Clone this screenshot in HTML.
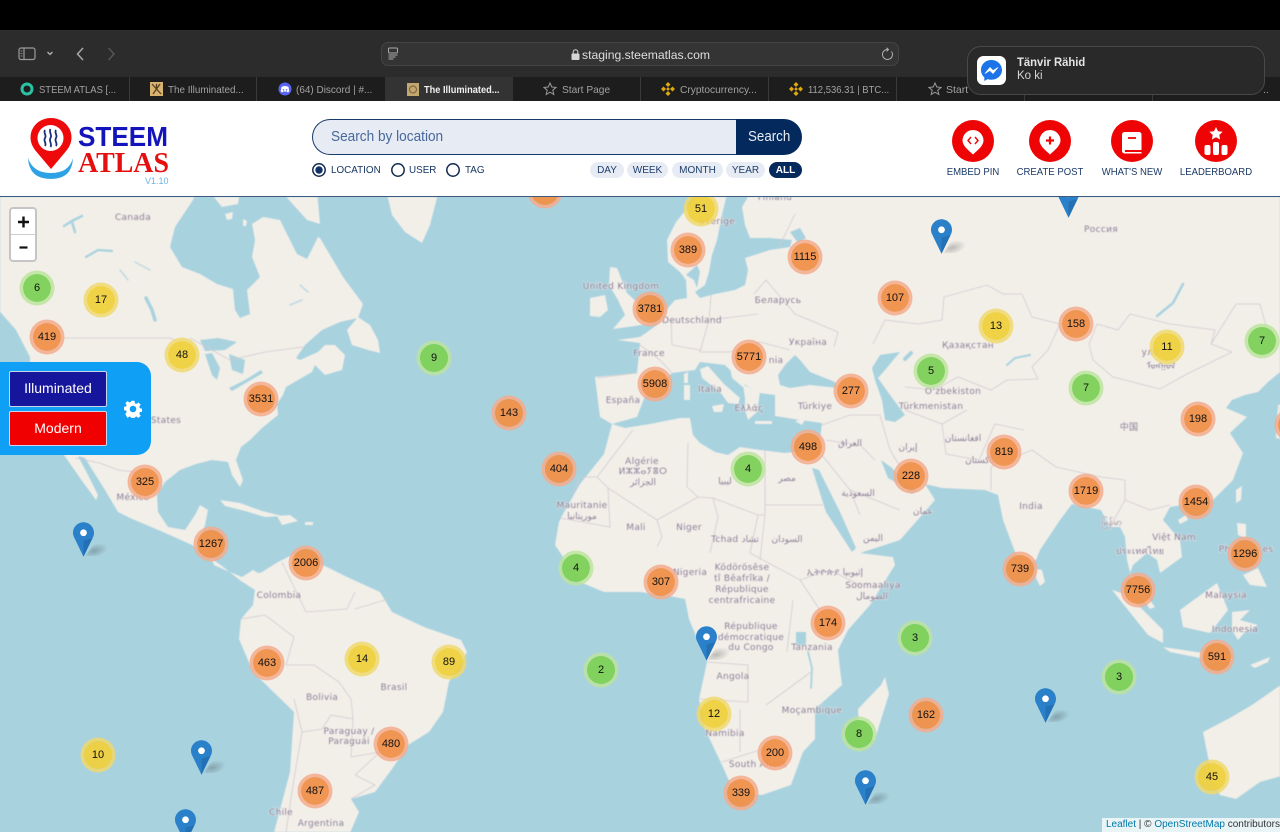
<!DOCTYPE html>
<html><head><meta charset="utf-8"><title>Steem Atlas</title>
<style>
*{box-sizing:border-box}
html,body{margin:0;padding:0;width:1280px;height:832px;overflow:hidden;background:#000;font-family:"Liberation Sans","Noto Sans CJK SC",sans-serif}
#root{position:relative;width:1280px;height:832px;overflow:hidden;background:#000}
.a{position:absolute}
#toolbar{left:0;top:30px;width:1280px;height:47px;background:#2d2c2d}
#tabs{left:0;top:77px;width:1280px;height:24px;background:#1d1d1d}
.sep{position:absolute;top:77px;width:1px;height:24px;background:#3a3a3a}
.tab{position:absolute;top:83.500px;font-size:10.500px;line-height:13px;color:#a2a2a2;white-space:nowrap;transform-origin:0 50%}
#addr{left:381px;top:42px;width:518px;height:24px;border-radius:7px;background:#353435;border:1px solid #454445}
#url{left:582px;top:47.500px;font-size:12.200px;line-height:14px;color:#dedede}
#notif{left:967px;top:46px;width:298px;height:49px;border-radius:14px;background:rgba(42,41,42,.97);border:1px solid #4a494a}
#header{left:0;top:101px;width:1280px;height:96px;background:#fff;border-bottom:1.500px solid #3c5a80}
#search{left:312px;top:119px;width:424px;height:36px;background:#e6ebf4;border:1.500px solid #173a68;border-right:0;border-radius:18px 0 0 18px}
#stxt{left:331px;top:129px;font-size:14.500px;line-height:17px;color:#48689a;transform:scaleX(.94);transform-origin:0 0;white-space:nowrap}
#sbtn{left:736px;top:119px;width:66px;height:36px;background:#042a5d;border-radius:0 18px 18px 0}
#sbt{left:748px;top:129px;color:#e8edf5;font-size:14.500px;line-height:17px;transform:scaleX(.92);transform-origin:0 0}
.rl{position:absolute;top:164px;font-size:10.500px;line-height:13px;color:#12325f;transform:scaleX(.94);transform-origin:0 0}
.pill{position:absolute;top:162px;height:16px;border-radius:8px;background:#e6ebf4;color:#1f3d6b;font-size:10px;line-height:17px;text-align:center}
.lab{position:absolute;top:165.500px;font-size:10.500px;line-height:13px;color:#1c3a66;white-space:nowrap;text-align:center;width:90px;transform:scaleX(.91)}
#map{left:0;top:197px;width:1280px;height:635px;overflow:hidden;background:#a9d2df}
#zoomc{left:9px;top:207px;width:28px;height:55px;background:#fff;border:2px solid #c5c5c5;border-radius:4px}
#panel{left:0;top:362px;width:151px;height:93px;background:#0f9ff5;border-radius:0 14px 14px 0}
.btn{position:absolute;left:9px;width:98px;height:36px;color:#fff;font-size:14px;text-align:center;line-height:33px;border:1px solid #c9d6ee;border-radius:2px}
#attr{left:1102px;top:818px;width:178px;height:14px;background:rgba(255,255,255,.75);font-size:10px;line-height:14px;color:#333;padding-left:4px;white-space:nowrap}
#attr span{color:#0078a8}
.c{position:absolute;width:28px;height:28px;margin:-14px 0 0 -14px;border-radius:50%;font-style:normal;font-size:11px;line-height:28px;text-align:center;color:#111}
.o{background:rgba(240,145,75,.96);box-shadow:0 0 0 3.500px rgba(245,172,140,.85)}
.y{background:rgba(239,208,62,.95);box-shadow:0 0 0 3.500px rgba(240,216,110,.85)}
.g{background:rgba(126,208,88,.96);box-shadow:0 0 0 3.500px rgba(188,228,158,.85)}
.pin{position:absolute;width:21px;height:35px}
.sh{position:absolute;width:18px;height:13px;background:radial-gradient(ellipse at 30% 60%,rgba(0,0,0,.22),rgba(0,0,0,0) 70%);transform:skewX(-35deg)}
</style></head><body><div id="root">

<div class="a" id="toolbar"></div>
<div class="a" id="tabs"></div>
<div class="a" style="left:385px;top:77px;width:128px;height:24px;background:#343334"></div>
<div class="sep" style="left:129px"></div><div class="sep" style="left:256px"></div><div class="sep" style="left:640px"></div><div class="sep" style="left:768px"></div><div class="sep" style="left:896px"></div><div class="sep" style="left:1024px"></div><div class="sep" style="left:1152px"></div>

<svg class="a" style="left:0;top:30px" width="130" height="47" viewBox="0 0 130 47" fill="none" stroke="#9a9a9a">
 <rect x="19" y="18" width="16" height="11.500" rx="2" stroke-width="1.200"/><path d="M24 18v11.500" stroke-width="1.200"/><path d="M20.500 21h2M20.500 23.500h2M20.500 26h2" stroke-width=".8"/>
 <path d="M47.500 22l2.500 2.500 2.500-2.500" stroke-width="1.300" stroke="#b5b5b5"/>
 <path d="M83 18l-5.500 6 5.500 6" stroke-width="1.500" stroke="#a8a8a8"/>
 <path d="M108.500 18l5.500 6-5.500 6" stroke-width="1.500" stroke="#555"/>
</svg>
<div class="a" id="addr"></div>
<svg class="a" style="left:387px;top:47px" width="14" height="14" viewBox="0 0 14 14" fill="none" stroke="#aaa" stroke-width="1"><rect x="1.500" y="1" width="9" height="5" rx="1"/><path d="M1.500 8h9M1.500 10h7M1.500 12h5"/></svg>
<svg class="a" style="left:570px;top:48px" width="11" height="13" viewBox="0 0 11 13"><rect x="1.500" y="5.500" width="8" height="6.500" rx="1" fill="#d5d5d5"/><path d="M3.200 6V4a2.300 2.300 0 0 1 4.600 0v2" fill="none" stroke="#d5d5d5" stroke-width="1"/></svg>
<div class="a" id="url">staging.steematlas.com</div>
<svg class="a" style="left:881px;top:47px" width="13" height="14" viewBox="0 0 13 14" fill="none" stroke="#b0b0b0" stroke-width="1"><path d="M10.500 4.500a5 5 0 1 1-3.500-2"/><path d="M5.500 0.800L7.500 2.500 5.700 4.400"/></svg>

<svg class="a" style="left:20px;top:82px" width="14" height="14" viewBox="0 0 14 14"><circle cx="7" cy="7" r="5" fill="none" stroke="#2bc2a4" stroke-width="3"/><path d="M4 3l4-2 1 3z" fill="#2bc2a4"/></svg>
<div class="tab" style="left:39px;transform:scaleX(.9)">STEEM ATLAS [...</div>
<svg class="a" style="left:150px;top:82px" width="13" height="14" viewBox="0 0 13 14"><rect width="13" height="14" fill="#d7b270"/><path d="M2 2l9 10M10 2L3 12M6.500 2v5" stroke="#5a3f20" stroke-width="1.300"/></svg>
<div class="tab" style="left:168px;transform:scaleX(.94)">The Illuminated...</div>
<svg class="a" style="left:278px;top:82px" width="14" height="14" viewBox="0 0 14 14"><circle cx="7" cy="7" r="6.500" fill="#5865f2"/><path d="M3.500 5q3.500-2 7 0l.8 4.500q-1 .8-2 .8l-.6-.9q-1.700.4-3.400 0l-.6.9q-1 0-2-.8z" fill="#fff"/><circle cx="5.500" cy="7.800" r=".8" fill="#5865f2"/><circle cx="8.500" cy="7.800" r=".8" fill="#5865f2"/></svg>
<div class="tab" style="left:296px;transform:scaleX(.95)">(64) Discord | #...</div>
<svg class="a" style="left:407px;top:83px" width="12" height="13" viewBox="0 0 12 13"><rect width="12" height="13" fill="#c4a76f"/><circle cx="6" cy="6.500" r="3.500" fill="none" stroke="#7d6a45" stroke-width="1.200"/></svg>
<div class="tab" style="left:424px;color:#f0f0f0;font-weight:bold;transform:scaleX(.88)">The Illuminated...</div>
<svg class="a" style="left:543px;top:82px" width="14" height="14" viewBox="0 0 14 14"><path d="M7 1l1.800 4 4.200.4-3.200 2.800 1 4.300L7 10.200 3.200 12.500l1-4.300L1 5.400 5.200 5z" fill="none" stroke="#9a9a9a"/></svg>
<div class="tab" style="left:562px;transform:scaleX(.97)">Start Page</div>
<svg class="a" style="left:661px;top:82px" width="14" height="14" viewBox="0 0 14 14" fill="#e0a80f"><path d="M7 0l2.500 2.500L7 5 4.500 2.500zM7 9l2.500 2.500L7 14l-2.500-2.500zM2.500 4.500L5 7 2.500 9.500 0 7zM11.500 4.500L14 7l-2.500 2.500L9 7z"/><rect x="5.700" y="5.700" width="2.600" height="2.600" transform="rotate(45 7 7)"/></svg>
<div class="tab" style="left:680px;transform:scaleX(.97)">Cryptocurrency...</div>
<svg class="a" style="left:789px;top:82px" width="14" height="14" viewBox="0 0 14 14" fill="#e0a80f"><path d="M7 0l2.500 2.500L7 5 4.500 2.500zM7 9l2.500 2.500L7 14l-2.500-2.500zM2.500 4.500L5 7 2.500 9.500 0 7zM11.500 4.500L14 7l-2.500 2.500L9 7z"/><rect x="5.700" y="5.700" width="2.600" height="2.600" transform="rotate(45 7 7)"/></svg>
<div class="tab" style="left:808px;transform:scaleX(.9)">112,536.31 | BTC...</div>
<svg class="a" style="left:928px;top:82px" width="14" height="14" viewBox="0 0 14 14"><path d="M7 1l1.800 4 4.200.4-3.200 2.800 1 4.300L7 10.200 3.200 12.500l1-4.300L1 5.400 5.200 5z" fill="none" stroke="#9a9a9a"/></svg>
<div class="tab" style="left:946px">Start</div>
<div class="tab" style="left:1263px">..</div>

<div class="a" id="notif"></div>
<svg class="a" style="left:977px;top:56px" width="29" height="29" viewBox="0 0 29 29"><rect width="29" height="29" rx="6.500" fill="#fff"/><path d="M14.500 4C8.500 4 4 8.300 4 14c0 3 1.200 5.500 3.300 7.300V25l3.400-1.900c1.200.4 2.500.6 3.800.6 6 0 10.500-4.300 10.500-9.700S20.500 4 14.500 4z" fill="#1c74e8"/><path d="M8 17.500l5-6 3 3 5-3-5 6-3-3z" fill="#fff" stroke="#fff" stroke-width=".6" stroke-linejoin="round"/></svg>
<div class="a" style="left:1017px;top:55px;font-size:12px;line-height:15px;color:#e4e4e4;font-weight:bold;transform:scaleX(.94);transform-origin:0 0">Tänvir Rähid</div>
<div class="a" style="left:1017px;top:69px;font-size:11.500px;line-height:15px;color:#d5d5d5">Ko ki</div>

<div class="a" id="header"></div>
<svg class="a" style="left:0;top:101px" width="200" height="96" viewBox="0 0 200 96">
 <path d="M28 57Q29 78 51 78Q72 78 73 57Q69 72 51 72Q33 72 28 57z" fill="#2da3e6"/>
 <path d="M51 17c-11.500 0-20.500 8.500-20.500 19.500 0 6 3 11 7 15.500L51 68l13.500-16c4-4.500 7-9.500 7-15.500C71.500 25.500 62.500 17 51 17z" fill="#ee0a0a"/>
 <circle cx="50.500" cy="37" r="13" fill="#fff"/>
 <path d="M45 29c-2 3 2 5 0 8s2 5 0 8M50.500 28c-2 3 2 6 0 9s2 6 0 9M56 29c-2 3 2 5 0 8s2 5 0 8" fill="none" stroke="#1a2f78" stroke-width="1.800"/>
 <text x="78" y="45" font-family="Liberation Sans" font-weight="bold" font-size="28" fill="#1414bd" textLength="90" lengthAdjust="spacingAndGlyphs">STEEM</text>
 <text x="78" y="71" font-family="Liberation Serif" font-weight="bold" font-size="29" fill="#e60f0f" textLength="91" lengthAdjust="spacingAndGlyphs">ATLAS</text>
 <text x="145" y="83" font-family="Liberation Sans" font-size="9" fill="#6ab4e6">V1.10</text>
</svg>

<div class="a" id="search"></div><div class="a" id="stxt">Search by location</div>
<div class="a" id="sbtn"></div><div class="a" id="sbt">Search</div>
<svg class="a" style="left:310px;top:161px" width="160" height="18" viewBox="0 0 160 18" fill="none" stroke="#12294f" stroke-width="1.500">
 <circle cx="9" cy="9" r="6.200"/><circle cx="9" cy="9" r="3.700" fill="#12306a" stroke="none"/>
 <circle cx="88" cy="9" r="6.200"/><circle cx="143" cy="9" r="6.200"/>
</svg>
<div class="rl" style="left:331px">LOCATION</div><div class="rl" style="left:409px">USER</div><div class="rl" style="left:465px">TAG</div>
<div class="pill" style="left:590px;width:34px">DAY</div>
<div class="pill" style="left:627px;width:41px">WEEK</div>
<div class="pill" style="left:672px;width:51px">MONTH</div>
<div class="pill" style="left:726px;width:39px">YEAR</div>
<div class="pill" style="left:769px;width:33px;background:#042a5d;color:#fff;font-weight:bold">ALL</div>

<svg class="a" style="left:940px;top:112px" width="320" height="56" viewBox="0 0 320 56">
 <g fill="#ee0404"><circle cx="33" cy="29" r="21"/><circle cx="110" cy="29" r="21"/><circle cx="192" cy="29" r="21"/><circle cx="276" cy="29" r="21"/></g>
 <g fill="#fff">
  <path d="M33 18a10.500 10.500 0 0 1 10.500 10.500c0 5-5.500 9.500-10.500 14-5-4.500-10.500-9-10.500-14A10.500 10.500 0 0 1 33 18z"/>
  <path d="M110 18a10.500 10.500 0 0 1 10.500 10.500c0 5-5.500 9.500-10.500 14-5-4.500-10.500-9-10.500-14A10.500 10.500 0 0 1 110 18z"/>
  <path d="M184 20h15a2.500 2.500 0 0 1 2.500 2.500v15.500h-16.500a3 3 0 0 0 0 2h16.500v1.500h-17a2.500 2.500 0 0 1-2.500-2.500v-16a3 3 0 0 1 2-3z"/>
  <path d="M276 15l2 4.200 4.600.6-3.300 3.200.8 4.500-4.100-2.200-4.100 2.200.8-4.500-3.300-3.200 4.600-.6z"/>
  <rect x="264.500" y="33" width="6" height="10" rx="2"/><rect x="273" y="30" width="6" height="13" rx="2"/><rect x="281.500" y="33" width="6" height="10" rx="2"/>
 </g>
 <path d="M31 25l-3 3.500 3 3.500M35 25l3 3.500-3 3.500" fill="none" stroke="#ee0404" stroke-width="1.400"/>
 <path d="M110 24.500v8M106 28.500h8" stroke="#ee0404" stroke-width="2.200"/>
 <path d="M188 26h8" stroke="#ee0404" stroke-width="1.800"/>
</svg>
<div class="lab" style="left:928px">EMBED PIN</div>
<div class="lab" style="left:1005px">CREATE POST</div>
<div class="lab" style="left:1087px">WHAT'S NEW</div>
<div class="lab" style="left:1171px">LEADERBOARD</div>

<div class="a" id="map">
<svg width="1280" height="635" viewBox="0 197 1280 635" style="display:block;filter:blur(.4px)">
<rect x="-5" y="190" width="1290" height="650" fill="#a9d2df"/>
<g fill="#f2efe9">
<polygon points="-5,190 197,190 193,200 175,227 170,247 182,267 200,274 217,284 233,289 235,310 240,318 250,314 247,290 260,277 252,257 255,240 252,224 263,217 280,220 297,254 307,259 318,237 320,238 343,277 363,304 358,318 340,322 322,330 305,345 296,358 300,360 318,352 325,345 335,345 345,355 342,370 325,375 315,365 312,372 298,380 286,387 283,395 277,404 278,415 262,428 250,440 241,447 236,460 243,480 240,487 232,475 228,462 212,460 196,464 180,470 165,482 157,495 158,512 168,527 185,530 195,515 200,505 208,510 205,525 200,540 208,548 214,565 225,570 242,577 253,570 262,575 255,590 241,581 222,566 192,545 163,532 130,518 118,512 105,490 85,458 78,456 88,475 98,495 96,500 80,478 62,452 45,420 30,380 30,357 16,330 -5,306"/>
<polygon points="280,190 307,220 320,224 317,190"/>
<polygon points="208,190 240,190 238,204 222,207"/>
<polygon points="225,214 233,212 232,219 227,220"/><polygon points="243,219 247,221 246,226 243,226"/>
<polygon points="347,330 358,317 370,325 378,340 380,353 368,350 352,345"/>
<polygon points="386,190 439,190 430,225 422,243 405,232 392,215"/>
<polygon points="220,500 240,503 262,511 282,516 265,517 245,511 225,506"/><polygon points="277,516 290,515 298,521 282,525"/><rect x="305" y="522" width="8" height="3"/>
<polygon points="253,575 262,572 278,562 294,554 327,567 347,577 380,592 392,612 424,627 461,640 467,652 449,682 443,712 429,732 408,745 392,769 375,792 351,799 359,812 347,840 272,840 290,772 294,712 253,672 239,639 241,619 253,605 255,589"/>
<polygon points="640,337 657,325 668,308 675,300 687,298 686,280 680,272 668,262 667,240 676,222 690,205 700,190 1285,190 1285,368 1268,382 1258,392 1245,395 1232,400 1226,408 1247,417 1230,433 1243,453 1233,480 1213,500 1170,507 1163,520 1180,540 1182,557 1160,573 1157,560 1147,553 1133,565 1130,573 1155,607 1150,609 1133,585 1127,560 1125,537 1120,527 1110,527 1101,510 1072,504 1060,520 1040,550 1036,560 1025,566 1015,552 1003,520 998,495 985,490 942,488 925,484 935,500 922,515 900,540 860,553 893,557 895,565 870,605 848,630 838,650 840,669 842,685 815,709 815,739 803,752 791,785 762,795 734,792 722,765 705,729 699,699 707,662 689,619 685,599 664,595 640,592 604,592 580,582 555,545 559,522 563,514 580,484 604,454 612,424 600,417 595,377 637,373 640,343 617,340"/>
<polygon points="610,267 617,268 627,293 640,305 653,323 635,326 613,329 625,315 618,300 609,285"/>
<polygon points="590,298 605,295 608,310 600,317 590,316"/>
<polygon points="885,677 889,694 875,739 860,742 858,709 881,685"/>
<polygon points="1180,610 1217,583 1228,610 1210,633 1183,627"/>
<polygon points="1112,590 1128,595 1163,630 1163,643 1148,635"/>
<polygon points="1163,647 1203,653 1200,658 1170,652"/>
<polygon points="1232,612 1250,610 1240,620 1258,625 1245,632 1238,640 1232,630"/>
<polygon points="1250,665 1270,657 1268,662 1255,668"/><polygon points="1206,660 1232,658 1232,661 1208,664"/>
<polygon points="1237,523 1246,524 1246,538 1238,535"/><polygon points="1243,575 1258,568 1267,587 1250,585"/>
<polygon points="1178,520 1186,515 1188,520 1180,524"/><polygon points="1236,490 1242,486 1241,500 1236,503"/>
<polygon points="1036,569 1042,570 1045,582 1040,586 1036,578"/>
<polygon points="1285,682 1252,705 1228,719 1203,732 1211,772 1220,795 1236,799 1260,782 1285,775"/>
<polygon points="1278,405 1285,403 1285,440 1276,438"/>
</g>
<g fill="#a9d2df">
<polygon points="686,275 697,265 700,272 697,288 694,280"/>
<polygon points="728,190 722,215 717,240 712,255 709,272 705,285 695,292 700,298 715,294 735,290 745,285 748,270 745,258 770,250 790,247 792,240 770,238 750,238 745,225 742,207 752,190"/>
<polygon points="612,424 625,428 650,424 680,418 690,418 693,435 700,443 715,452 728,455 740,447 760,450 785,453 810,450 820,440 822,423 800,420 775,416 775,395 760,393 745,385 725,365 700,362 695,370 672,373 645,396 637,417"/>
<polygon points="785,365 795,355 800,360 810,372 835,382 838,388 810,385 790,388 780,385 778,375"/>
<polygon points="880,355 900,352 885,370 878,378 890,395 905,415 895,422 885,420 882,400 875,380 872,368"/>
<polygon points="812,468 819,470 840,512 856,548 852,552 826,512"/>
<polygon points="881,460 892,468 909,485 917,490 912,494 900,485 888,478"/>
<polygon points="200,340 218,338 237,342 225,350 205,351"/><polygon points="205,354 212,353 220,368 217,380 212,375"/>
<polygon points="229,354 245,360 243,374 232,370"/><polygon points="229,388 245,380 261,370 263,373 232,391"/>
<polygon points="790,232 800,228 806,238 798,243"/>
<polygon points="796,632 806,632 806,645 796,646"/>
</g>
<g fill="none" stroke="#a9d2df" stroke-linecap="round">
<path d="M146,298 152,310 155,320" stroke-width="3.500"/><path d="M64,226 72,221 82,216 M72,222 75,232" stroke-width="2.500"/><path d="M86,257 98,250 112,251" stroke-width="2.200"/>
<path d="M1157,316 1173,303 1183,284" stroke-width="2.500"/><path d="M1007,365 1015,358 1030,355" stroke-width="2"/><path d="M808,652 812,668 811,688" stroke-width="1.800"/>
<path d="M905,359 911,353" stroke-width="4"/><path d="M135,262 150,270 M120,270 128,280 M290,305 302,300 M300,285 308,292" stroke-width="1.500" opacity=".7"/>
</g>
<g fill="#f2efe9">
<polygon points="700,369 708,366 724,384 740,398 738,404 728,403 720,392 702,378"/>
<polygon points="712,406 724,404 722,412 714,412"/><polygon points="684,385 690,385 690,400 684,400"/><polygon points="684,374 688,372 688,383 684,383"/>
<polygon points="743,385 760,392 757,412 748,420 745,410 745,398"/><polygon points="755,421 772,421 772,424 755,424"/><polygon points="795,421 806,418 802,425"/>
<polygon points="730,367 745,380 744,388 732,378"/>
</g>
<g fill="none" stroke="#d2cad0" stroke-width=".8">
<path d="M60,338H170L176,341 M190,338 230,360 265,352 303,347 M75,458 100,463 118,470 135,472 150,490"/>
<path d="M640,345 660,360 672,373 M597,378 637,373 M671,320 672,345 M711,295 709,320 758,314 M754,294 766,280 795,314 838,332 834,347 M795,214 779,247 M709,320 700,352 730,352 760,342 790,350 M672,345 700,350"/>
<path d="M873,344 885,320 918,324 942,320 944,297 987,285 1003,294 1022,294 1032,317 1060,324 1048,350 1032,367 1038,379 1007,380 991,390 958,377 934,390 905,387"/>
<path d="M1089,344 1093,360 1113,377 1160,389 1187,374 1232,352 1211,344 1215,330 1170,324 1130,314 1118,330 1097,324 1089,344 M1211,344 1236,304 1260,304 1269,337"/>
<path d="M905,410 942,424 967,410 M942,424 946,454 979,460 995,424 1024,430 M991,490 991,467 1032,450 1056,467 1101,477 1125,480 1125,500 1110,527 M1125,500 1150,510 1170,505"/>
<path d="M822,425 850,415 880,415 890,450 905,475 M825,440 860,445 875,460 M822,455 850,490 900,510 M850,490 860,515"/>
<path d="M597,477 633,430 M597,477 580,477 573,493 M597,477 608,488 657,520 698,497 687,487 688,443 M698,497 713,498 758,515 765,515 765,450 M765,505H823 M608,488 610,527 560,518 M657,520 662,537 657,547 M713,498 718,517 710,553 M758,515 750,553 M765,515 760,560 M750,553 800,580 830,570 860,585 M800,580 820,610 840,630 M793,600 787,652 M707,662 748,665 748,702 699,699 M740,709V752 M722,762 760,750 775,745 M766,705 811,672"/>
<path d="M282,562 306,612 347,609 355,592 M355,609 388,599 M241,619 265,615 294,637 286,665 314,665 339,682 351,699 353,719 331,715 322,729 302,732 294,699 M302,732 294,779 286,832 M353,719 351,757 380,752 355,775 M355,775 375,785 351,799"/>
</g>
<g font-family="DejaVu Sans,Liberation Sans,Noto Sans CJK SC,sans-serif" font-size="9" fill="#8d7f98" text-anchor="middle" letter-spacing=".3" stroke="#f2efe9" stroke-width="1.500" paint-order="stroke" stroke-opacity=".55">
<text x="133" y="220">Canada</text><text x="166" y="423">States</text><text x="133" y="500">México</text>
<text x="621" y="289">United Kingdom</text><text x="649" y="356">France</text><text x="692" y="323">Deutschland</text><text x="778" y="303">Беларусь</text><text x="808" y="345">Україна</text>
<text x="623" y="403">España</text><text x="710" y="392">Italia</text><text x="749" y="411">Ελλάς</text><text x="815" y="409">Türkiye</text><text x="968" y="348">Қазақстан</text><text x="953" y="394">Oʻzbekiston</text><text x="931" y="409">Türkmenistan</text>
<text x="1101" y="232">Россия</text><text x="717" y="224">Sverige</text><text x="775" y="200">Finland</text><text x="776" y="363">nia</text>
<text x="1150" y="355">улс</text><text x="1161" y="369">ᠮᠣᠩᠭᠣᠯ</text><text x="1129" y="430">中国</text><text x="1031" y="509">India</text>
<text x="642" y="464">Algérie</text><text x="643" y="474">ⵍⵣⵣⴰⵢⴻⵔ</text><text x="643" y="485">الجزائر</text><text x="582" y="508">Mauritanie</text><text x="582" y="519">موريتانيا</text><text x="636" y="530">Mali</text><text x="689" y="530">Niger</text>
<text x="735" y="542">Tchad تشاد</text><text x="787" y="542">السودان</text><text x="725" y="484">ليبيا</text><text x="787" y="481">مصر</text><text x="850" y="446">العراق</text><text x="908" y="450">إيران</text><text x="963" y="441">افغانستان</text><text x="980" y="463">پاکستان</text><text x="858" y="496">السعودية</text><text x="923" y="514">عمان</text><text x="873" y="541">اليمن</text>
<text x="690" y="575">Nigeria</text><text x="742" y="570">Ködörösêse</text><text x="742" y="581">tî Bêafrîka /</text><text x="742" y="592">République</text><text x="742" y="603">centrafricaine</text>
<text x="751" y="629">République</text><text x="751" y="640">démocratique</text><text x="751" y="650">du Congo</text><text x="812" y="650">Tanzania</text><text x="733" y="679">Angola</text><text x="725" y="736">Namibia</text><text x="812" y="713">Moçambique</text><text x="758" y="767">South Africa</text>
<text x="873" y="588">Soomaaliya</text><text x="872" y="599">الصومال</text><text x="835" y="575">ኢትዮጵያ إثيوبيا</text>
<text x="1226" y="598">Malaysia</text><text x="1235" y="632">Indonesia</text><text x="1174" y="540">Việt Nam</text><text x="1140" y="554">ประเทศไทย</text><text x="1112" y="525">မြန်မာ</text><text x="1226" y="552">Phi</text><text x="1268" y="552">es</text>
<text x="279" y="598">Colombia</text><text x="394" y="690">Brasil</text><text x="322" y="700">Bolivia</text><text x="349" y="734">Paraguay /</text><text x="349" y="744">Paraguái</text><text x="281" y="815">Chile</text><text x="321" y="826">Argentina</text>
</g>
</svg>
</div>

<div class="sh" style="left:948px;top:240px"></div><div class="sh" style="left:90px;top:543px"></div><div class="sh" style="left:712px;top:647px"></div><div class="sh" style="left:208px;top:760px"></div><div class="sh" style="left:1052px;top:709px"></div><div class="sh" style="left:872px;top:791px"></div>
<svg width="0" height="0" style="position:absolute"><defs><symbol id="p" viewBox="0 0 25 41"><path d="M12.500 0C5.600 0 0 5.600 0 12.500c0 2.200.6 4.400 1.700 6.200L12.500 41l10.800-22.300c1.100-1.800 1.700-4 1.700-6.200C25 5.600 19.400 0 12.500 0z" fill="#2b80ca"/><path d="M12.500 41L12.500 22 23.300 18.700z" fill="#2470b5"/><circle cx="12.500" cy="12.500" r="4" fill="#fff"/></symbol></defs></svg>
<svg class="pin" style="left:931px;top:219px"><use href="#p"/></svg>
<svg class="pin" style="left:1058px;top:183px;clip-path:inset(14px 0 0 0)"><use href="#p"/></svg>
<svg class="pin" style="left:73px;top:522px"><use href="#p"/></svg>
<svg class="pin" style="left:696px;top:626px"><use href="#p"/></svg>
<svg class="pin" style="left:191px;top:740px"><use href="#p"/></svg>
<svg class="pin" style="left:1035px;top:688px"><use href="#p"/></svg>
<svg class="pin" style="left:855px;top:770px"><use href="#p"/></svg>
<svg class="pin" style="left:175px;top:809px"><use href="#p"/></svg>

<div class="a" style="left:0;top:197px;width:1280px;height:635px;overflow:hidden">
<div style="position:relative;top:-197px;height:832px">
<i class="c o" style="left:545px;top:191px">306</i><i class="c o" style="left:688px;top:250px">389</i><i class="c o" style="left:805px;top:257px">1115</i><i class="c o" style="left:650px;top:309px">3781</i><i class="c o" style="left:895px;top:298px">107</i><i class="c o" style="left:1076px;top:324px">158</i><i class="c o" style="left:47px;top:337px">419</i><i class="c o" style="left:749px;top:357px">5771</i><i class="c o" style="left:655px;top:384px">5908</i><i class="c o" style="left:851px;top:391px">277</i><i class="c o" style="left:261px;top:399px">3531</i><i class="c o" style="left:509px;top:413px">143</i><i class="c o" style="left:1198px;top:419px">198</i><i class="c o" style="left:808px;top:447px">498</i><i class="c o" style="left:1004px;top:452px">819</i><i class="c o" style="left:559px;top:469px">404</i><i class="c o" style="left:911px;top:476px">228</i><i class="c o" style="left:145px;top:482px">325</i><i class="c o" style="left:1086px;top:491px">1719</i><i class="c o" style="left:1196px;top:502px">1454</i><i class="c o" style="left:211px;top:544px">1267</i><i class="c o" style="left:306px;top:563px">2006</i><i class="c o" style="left:1245px;top:554px">1296</i><i class="c o" style="left:1020px;top:569px">739</i><i class="c o" style="left:661px;top:582px">307</i><i class="c o" style="left:1138px;top:590px">7756</i><i class="c o" style="left:828px;top:623px">174</i><i class="c o" style="left:1217px;top:657px">591</i><i class="c o" style="left:267px;top:663px">463</i><i class="c o" style="left:926px;top:715px">162</i><i class="c o" style="left:391px;top:744px">480</i><i class="c o" style="left:775px;top:753px">200</i><i class="c o" style="left:315px;top:791px">487</i><i class="c o" style="left:741px;top:793px">339</i><i class="c o" style="left:1292px;top:425px">&nbsp;</i>
<i class="c y" style="left:701px;top:209px">51</i><i class="c y" style="left:101px;top:300px">17</i><i class="c y" style="left:182px;top:355px">48</i><i class="c y" style="left:996px;top:326px">13</i><i class="c y" style="left:1167px;top:347px">11</i><i class="c y" style="left:362px;top:659px">14</i><i class="c y" style="left:449px;top:662px">89</i><i class="c y" style="left:714px;top:714px">12</i><i class="c y" style="left:98px;top:755px">10</i><i class="c y" style="left:1212px;top:777px">45</i>
<i class="c g" style="left:37px;top:288px">6</i><i class="c g" style="left:434px;top:358px">9</i><i class="c g" style="left:931px;top:371px">5</i><i class="c g" style="left:1262px;top:341px">7</i><i class="c g" style="left:1086px;top:388px">7</i><i class="c g" style="left:748px;top:469px">4</i><i class="c g" style="left:576px;top:568px">4</i><i class="c g" style="left:915px;top:638px">3</i><i class="c g" style="left:601px;top:670px">2</i><i class="c g" style="left:1119px;top:677px">3</i><i class="c g" style="left:859px;top:734px">8</i>
</div></div>

<div class="a" id="zoomc"></div>
<div class="a" style="left:11px;top:234px;width:24px;height:1px;background:#ccc"></div>
<svg class="a" style="left:11px;top:209px" width="24" height="52" viewBox="0 0 24 52"><path d="M12.500 7.500v11M7 13h11" stroke="#111" stroke-width="2.400"/><path d="M8.500 38.500h8" stroke="#111" stroke-width="2.200"/></svg>

<div class="a" id="panel"></div>
<div class="btn" style="top:371px;background:#16169c">Illuminated</div>
<div class="btn" style="top:411px;height:35px;background:#f00000">Modern</div>
<svg class="a" style="left:124px;top:400px" width="18" height="18" viewBox="0 0 18 18"><g fill="#fff"><path d="M7.400 0h3.200l.5 2.600 1.600.7 2.200-1.500 2.300 2.300-1.500 2.200.7 1.600 2.600.5v3.200l-2.600.5-.7 1.600 1.500 2.200-2.300 2.300-2.200-1.500-1.600.7-.5 2.600H7.400l-.5-2.600-1.600-.7-2.200 1.500L.8 14.100l1.500-2.200-.7-1.600L-1 9.800V6.600l2.600-.5.7-1.600L.8 2.600 3.100.3l2.200 1.500 1.600-.7z" transform="translate(.5 .8) scale(.94)"/></g><circle cx="9" cy="9" r="3.300" fill="#0f9ff5"/></svg>

<div class="a" id="attr"><span>Leaflet</span> | © <span>OpenStreetMap</span> contributors</div>
</div></body></html>
